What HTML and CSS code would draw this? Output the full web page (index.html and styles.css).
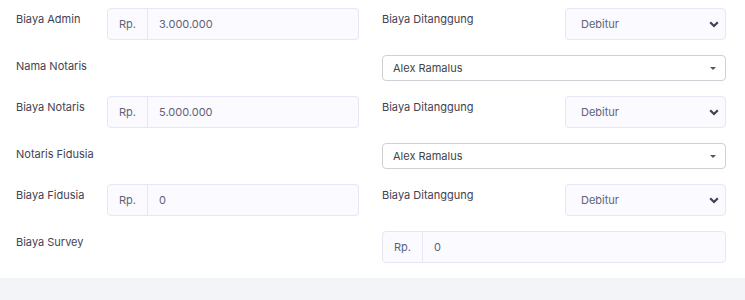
FILE: index.html
```html
<!DOCTYPE html>
<html lang="en">
<head>
  <meta charset="UTF-8">
  <meta name="viewport" content="width=device-width, initial-scale=1.0">
  <title>Biaya</title>
  <link rel="stylesheet" href="styles.css">
</head>
<body>
  <div class="card">
    <div class="form-grid">
      <!-- row 1 -->
      <div class="field">
        <label class="label">Biaya Admin</label>
        <div class="input-group wide">
          <span class="addon">Rp.</span>
          <span class="value">3.000.000</span>
        </div>
      </div>
      <div class="field">
        <label class="label label-right">Biaya Ditanggung</label>
        <div class="select">
          <span>Debitur</span>
          <svg class="chevron" width="10" height="7" viewBox="0 0 10 7"><path d="M1.2 1.3 L5 5 L8.8 1.3" fill="none" stroke="#3f4254" stroke-width="2.2"/></svg>
        </div>
      </div>

      <!-- row 2 -->
      <div class="field">
        <label class="label">Nama Notaris</label>
      </div>
      <div class="field">
        <div class="select2">
          <span>Alex Ramalus</span>
          <span class="caret"></span>
        </div>
      </div>

      <!-- row 3 -->
      <div class="field">
        <label class="label">Biaya Notaris</label>
        <div class="input-group wide">
          <span class="addon">Rp.</span>
          <span class="value">5.000.000</span>
        </div>
      </div>
      <div class="field">
        <label class="label label-right">Biaya Ditanggung</label>
        <div class="select">
          <span>Debitur</span>
          <svg class="chevron" width="10" height="7" viewBox="0 0 10 7"><path d="M1.2 1.3 L5 5 L8.8 1.3" fill="none" stroke="#3f4254" stroke-width="2.2"/></svg>
        </div>
      </div>

      <!-- row 4 -->
      <div class="field">
        <label class="label">Notaris Fidusia</label>
      </div>
      <div class="field">
        <div class="select2">
          <span>Alex Ramalus</span>
          <span class="caret"></span>
        </div>
      </div>

      <!-- row 5 -->
      <div class="field">
        <label class="label">Biaya Fidusia</label>
        <div class="input-group wide">
          <span class="addon">Rp.</span>
          <span class="value">0</span>
        </div>
      </div>
      <div class="field">
        <label class="label label-right">Biaya Ditanggung</label>
        <div class="select">
          <span>Debitur</span>
          <svg class="chevron" width="10" height="7" viewBox="0 0 10 7"><path d="M1.2 1.3 L5 5 L8.8 1.3" fill="none" stroke="#3f4254" stroke-width="2.2"/></svg>
        </div>
      </div>

      <!-- row 6 -->
      <div class="field">
        <label class="label">Biaya Survey</label>
      </div>
      <div class="field">
        <div class="input-group full">
          <span class="addon">Rp.</span>
          <span class="value">0</span>
        </div>
      </div>
    </div>
  </div>
</body>
</html>
```
FILE: styles.css
```css
body {
  margin: 0;
  background: #f3f4f8;
  font-family: Inter, 'Noto Sans', sans-serif;
  font-size: 11px;
  color: #3f4254;
}
.card {
  background: #fff;
  padding: 8px 19px 15px 16px;
}
.form-grid {
  display: grid;
  grid-template-columns: 343px 344px;
  column-gap: 23px;
  row-gap: 15px;
}
.field {
  display: flex;
  align-items: flex-start;
}
.label {
  flex: none;
  width: 91px;
  padding-top: 3px;
  line-height: 16px;
  white-space: nowrap;
  color: #3f4254;
}
.label-right {
  width: 183px;
}
.input-group {
  display: flex;
  height: 32px;
  box-sizing: border-box;
  border: 1px solid #e6e6f6;
  border-radius: 4px;
  background: #fbfbff;
  color: #5e6278;
}
.input-group.wide {
  width: 252px;
}
.input-group.full {
  width: 344px;
}
.addon {
  width: 39px;
  border-right: 1px solid #e6e6f6;
  display: flex;
  align-items: center;
  justify-content: center;
}
.value {
  display: flex;
  align-items: center;
  padding-left: 11px;
}
.select {
  width: 161px;
  height: 32px;
  box-sizing: border-box;
  border: 1px solid #e6e6f6;
  border-radius: 4px;
  background: #fbfbff;
  color: #5e6278;
  display: flex;
  align-items: center;
  justify-content: space-between;
  padding: 0 6px 0 15px;
}
.select2 {
  width: 344px;
  height: 26px;
  box-sizing: border-box;
  border: 1px solid #cfcfd6;
  border-radius: 4px;
  background: #fff;
  color: #444;
  display: flex;
  align-items: center;
  justify-content: space-between;
  padding: 0 9px 0 10px;
}
.caret {
  width: 0;
  height: 0;
  border-left: 3px solid transparent;
  border-right: 3px solid transparent;
  border-top: 3px solid #555;
}
```
